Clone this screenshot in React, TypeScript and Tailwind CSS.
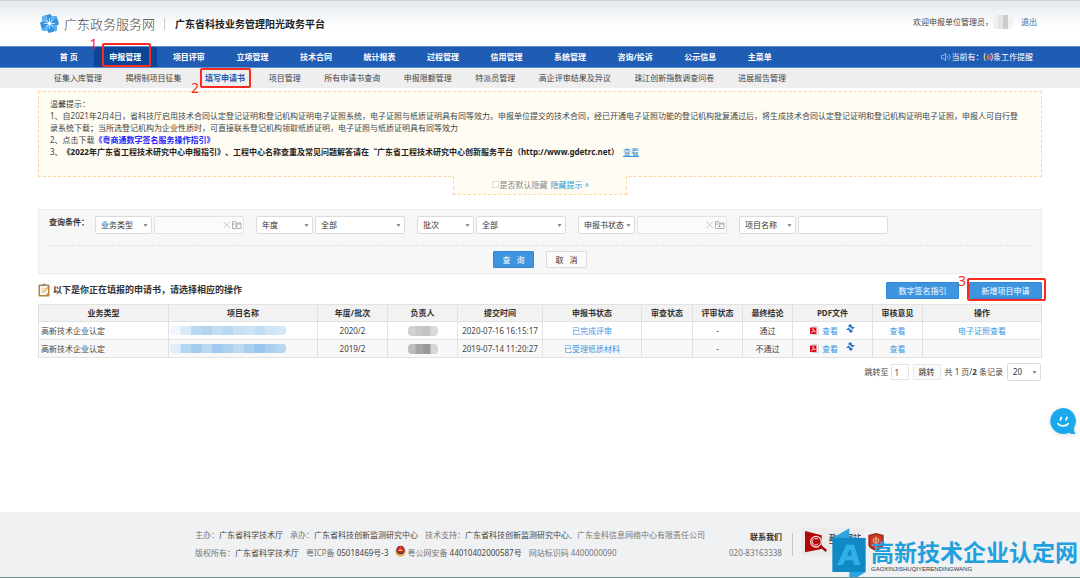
import React from 'react';

const navItems = ['首 页', '申报管理', '项目评审', '立项管理', '技术合同', '统计报表', '过程管理', '信用管理', '系统管理', '咨询/投诉', '公示信息', '主菜单'];

const subItems = ['征集入库管理', '揭榜制项目征集', '填写申请书', '项目管理', '所有申请书查询', '申报限额管理', '特派员管理', '高企评审结果及异议', '珠江创新指数调查问卷', '进展报告管理'];

const columns = [
  { label: '业务类型', width: 'w-[130px]' },
  { label: '项目名称', width: 'w-[149px]' },
  { label: '年度/批次', width: 'w-[70px]' },
  { label: '负责人', width: 'w-[70px]' },
  { label: '提交时间', width: 'w-[85px]' },
  { label: '申报书状态', width: 'w-[99px]' },
  { label: '审查状态', width: 'w-[51px]' },
  { label: '评审状态', width: 'w-[50px]' },
  { label: '最终结论', width: 'w-[50px]' },
  { label: 'PDF文件', width: 'w-[80px]' },
  { label: '审核意见', width: 'w-[50px]' },
  { label: '操作', width: 'w-auto' },
];

const rows = [
  {
    type: '高新技术企业认定',
    name: ['#f1f7fc', '#d9eaf7', '#b9d8f2', '#b3d5f1', '#c3def4', '#b7d8f2', '#c6e0f4', '#cde4f6', '#c2def4', '#cfe5f6', '#d4e8f7'],
    year: '2020/2',
    person: ['#d2d2d2', '#c9c9c9', '#c3c3c3', '#dadada'],
    time: '2020-07-16 16:15:17',
    status: '已完成评审',
    result: '通过',
    action: '电子证照查看',
  },
  {
    type: '高新技术企业认定',
    name: ['#dfeefa', '#b5d6f1', '#a3ccee', '#b9d9f2', '#9fcaed', '#abd1ef', '#bcdaf2', '#a8cfef', '#98c6ec', '#a9d0ef', '#b6d7f1'],
    year: '2019/2',
    person: ['#bdbdbd', '#a5a5a5', '#999999', '#d5d5d5'],
    time: '2019-07-14 11:20:27',
    status: '已受理纸质材料',
    result: '不通过',
    action: '',
  },
];

function Mark({ n, box, num }: { n: string; box: string; num: string }) {
  return (
    <>
      <span className={`pointer-events-none absolute z-10 rounded-[2px] border-2 border-[#fb2a20] ${box}`} />
      <span className={`pointer-events-none absolute z-10 text-[14px] leading-[14px] font-normal text-[#fb2a20] ${num}`}>{n}</span>
    </>
  );
}

function PinwheelLogo() {
  return (
    <svg className="size-[19px]" viewBox="0 0 38 38" aria-hidden="true">
      {[0, 90, 180, 270].map((a) => (
        <g key={a} transform={`rotate(${a} 19 19)`}>
          <path d="M19 18L9 9L10 3L20 0L23 3V12Z" fill="#3593e0" />
          <path d="M20 17L23 4H33L35 7L34 14L26 15Z" fill="#5fb0ee" />
        </g>
      ))}
      <path d="M19 8V30M8 19H30M11 11L27 27M27 11L11 27" stroke="#e8f4fd" strokeWidth="1.6" />
      <circle cx="19" cy="19" r="2.500" fill="#fff" />
    </svg>
  );
}

function Mosaic({ colors, cell, className }: { colors: string[]; cell: number; className: string }) {
  return (
    <svg className={className} viewBox={`0 0 ${colors.length * cell} ${cell}`} preserveAspectRatio="none" aria-hidden="true">
      {colors.map((c, i) => (
        <rect key={i} x={i * cell} width={cell + 1} height={cell} fill={c} />
      ))}
    </svg>
  );
}

function Select({ label, text, className }: { label: string; text: string; className: string }) {
  return (
    <span className={`relative flex h-[18px] items-center ${className}`}>
      <select aria-label={label} className="h-full w-full appearance-none rounded-[2px] border border-[#dcdcdc] bg-white pl-[5px] text-[8px] leading-[16px] text-[#333]">
        <option>{text}</option>
      </select>
      <svg className="pointer-events-none absolute right-[4px] size-[5px]" viewBox="0 0 10 10" aria-hidden="true">
        <path d="M1 2H9L5 8Z" fill="#888" />
      </svg>
    </span>
  );
}

function PickerInput({ label }: { label: string }) {
  return (
    <span className="relative flex h-[18px] w-[90px] items-center">
      <input aria-label={label} className="h-full w-full rounded-[2px] border border-[#e2e2e2] bg-[#fbfbfb] px-1 text-[8px]" />
      <svg className="pointer-events-none absolute right-[2px] h-[10px] w-[20px]" viewBox="0 0 40 20" fill="none" aria-hidden="true">
        <path d="M3 3L16 16M16 3L3 16" stroke="#bbb" strokeWidth="1.6" />
        <path d="M21 17V3H27L29 6H38V17ZM21 8H38M29 10V15M26 12.500H32" stroke="#999" strokeWidth="1.5" />
      </svg>
    </span>
  );
}

function PdfIcon() {
  return (
    <svg className="h-[9px] w-[9px]" viewBox="0 0 18 18" aria-hidden="true">
      <path d="M5 1H14L17 4V17H5Z" fill="#fff" stroke="#aaa" />
      <rect y="3" width="13" height="13" fill="#d8101c" />
      <path d="M3 13C6 11 7 8 6 5C6 9 9 11 11 11C8 10 5 11 3 13Z" fill="none" stroke="#fff" strokeWidth="1.2" />
    </svg>
  );
}

function RefreshIcon() {
  return (
    <svg className="mb-[4px] ml-[5px] size-[9px]" viewBox="0 0 18 18" fill="#2c78c8" aria-hidden="true">
      <path d="M8 0L12 3V6H18L13 11L9 7H8L4 4Z" />
      <path d="M10 18L6 15V12H0L5 7L9 11H10L14 14Z" />
    </svg>
  );
}

function Header() {
  return (
    <header className="flex h-[46px] items-center border-t border-[#d2d4d6] bg-linear-to-b from-[#e3e9ef] to-white to-55% pr-[43px] pl-[40px]">
      <PinwheelLogo />
      <span className="ml-[5px] text-[13px] leading-[18px] font-light text-[#444]">广东政务服务网</span>
      <span className="mr-[10px] ml-[9px] h-[12px] w-px bg-[#ccc]" />
      <h1 className="text-[10px] leading-[18px] font-bold text-[#222]">广东省科技业务管理阳光政务平台</h1>
      <div className="ml-auto flex items-center pb-[3px] text-[8px] leading-[12px]">
        <span className="text-[#444]">欢迎申报单位管理员，</span>
        <Mosaic colors={['#f0f0f0', '#e4e4e4', '#cccccc', '#f2f2f2']} cell={10} className="h-[14px] w-[20px] rounded-[4px]" />
        <a href="#" className="ml-[8px] text-[#2f6ea8]">退出</a>
      </div>
    </header>
  );
}

function Nav() {
  return (
    <nav>
      <div className="flex h-[22px] border-y border-[#5d8fd0] bg-[#1f5cb4] pr-[47px] pl-[44px] text-[8px] leading-[20px] text-white">
        <ul className="mr-[153px] flex flex-1 font-bold">
          {navItems.map((item) => (
            <li key={item} className={`relative flex-auto text-center ${item === '申报管理' ? 'bg-[#0c4496]' : ''}`}>
              <a href="#" className="block">{item}</a>
              {item === '申报管理' && <Mark n="1" box="-top-[4px] left-[8px] h-[24px] w-[49px]" num="-top-[10px] -left-[4px]" />}
            </li>
          ))}
        </ul>
        <a href="#" className="flex items-center whitespace-nowrap">
          <svg className="mr-px h-[8px] w-[10px]" viewBox="0 0 20 16" fill="none" stroke="#c9dbf3" strokeWidth="1.4" aria-hidden="true">
            <path d="M1 5H4L9 1V15L4 11H1ZM12 5C14 7 14 9 12 11M15 2C19 6 19 10 15 14" />
          </svg>
          当前有：(<b className="text-[#ff6a1f]">6</b>)条工作提醒
        </a>
      </div>
      <ul className="flex h-[20px] justify-between bg-[#eee] pr-[294px] pl-[54px] text-[8px] leading-[20px] text-[#444]">
        {subItems.map((item) => (
          <li key={item} className="relative">
            <a href="#" className={item === '填写申请书' ? 'font-bold text-[#1f5cb4]' : ''}>{item}</a>
            {item === '填写申请书' && <Mark n="2" box="top-0 -left-[5px] h-[20px] w-[51px]" num="top-[13px] -left-[14px]" />}
          </li>
        ))}
      </ul>
    </nav>
  );
}

function Tips() {
  return (
    <section className="mt-[3px] text-[8px] leading-[12px] text-[#444]">
      <div className="h-[86px] border border-dashed border-[#fbd9a0] bg-[#fffdf3] pt-[6px] pr-[22px] pl-[11px]">
        <p>温馨提示：</p>
        <p>1、自2021年2月4日，省科技厅启用技术合同认定登记证明和登记机构证明电子证照系统，电子证照与纸质证明具有同等效力。申报单位提交的技术合同，经已开通电子证照功能的登记机构批复通过后，将生成技术合同认定登记证明和登记机构证明电子证照，申报人可自行登录系统下载；当所选登记机构为企业性质时，可直接联系登记机构领取纸质证明，电子证照与纸质证明具有同等效力</p>
        <p>2、点击下载<a href="#" className="font-bold text-[#2a1fff]">《粤商通数字签名服务操作指引》</a></p>
        <p>
          3、<b className="text-[#222]">《2022年广东省工程技术研究中心申报指引》、工程中心名称查重及常见问题解答请在<span className="font-['Noto_Sans_CJK_SC',sans-serif]">“</span>广东省工程技术研究中心创新服务平台（http://www.gdetrc.net）</b>
          <a href="#" className="ml-[4px] text-[#3593dd] underline">查看</a>
        </p>
      </div>
      <div className="mx-auto -mt-px flex h-[19px] w-[174px] items-center justify-center border border-t-0 border-dashed border-[#fbd9a0] bg-[#fffdf3] pb-px text-[#888]">
        <label className="flex items-center">
          <input type="checkbox" className="mr-px size-[7px] appearance-none border border-[#ddd] bg-white" />
          是否默认隐藏
        </label>
        <a href="#" className="ml-[3px] flex items-center text-[#2f97d0]">
          隐藏提示
          <svg className="ml-[2px] size-[4px]" viewBox="0 0 10 10" fill="none" stroke="#2f97d0" strokeWidth="2" aria-hidden="true">
            <path d="M1 5L5 1L9 5M1 9L5 5L9 9" />
          </svg>
        </a>
      </div>
    </section>
  );
}

function Filters() {
  return (
    <form className="mt-[14px] border border-[#ececec] bg-[#f7f7f7] px-[8px] pt-[6px] pb-[5px] text-[8px]">
      <div className="flex items-start border-b border-dashed border-[#e2e2e2] pb-[11px] pl-[2px]">
        <span className="w-[46px] leading-[12px] font-bold text-[#333]">查询条件：</span>
        <div className="flex flex-wrap gap-x-[12px]">
          <div className="flex gap-[2px]"><Select label="条件一" text="业务类型" className="w-[57px]" /><PickerInput label="业务类型" /></div>
          <div className="flex gap-[2px]"><Select label="条件二" text="年度" className="w-[57px]" /><Select label="年度" text="全部" className="w-[90px]" /></div>
          <div className="flex gap-[2px]"><Select label="条件三" text="批次" className="w-[57px]" /><Select label="批次" text="全部" className="w-[90px]" /></div>
          <div className="flex gap-[2px]"><Select label="条件四" text="申报书状态" className="w-[57px]" /><PickerInput label="申报书状态" /></div>
          <div className="flex gap-[2px]">
            <Select label="条件五" text="项目名称" className="w-[57px]" />
            <input aria-label="项目名称" className="h-[18px] w-[90px] rounded-[2px] border border-[#dcdcdc] bg-white px-1" />
          </div>
        </div>
      </div>
      <div className="mt-[5px] flex justify-center gap-[12px]">
        <button type="button" className="h-[17px] w-[41px] rounded-[1px] border border-[#3288d4] bg-[#3e95df] leading-[15px] whitespace-pre text-white">查   询</button>
        <button type="button" className="h-[17px] w-[41px] rounded-[1px] border border-[#dcdcdc] bg-[#fbfbfb] leading-[15px] whitespace-pre text-[#333]">取   消</button>
      </div>
    </form>
  );
}

function Results() {
  const cell = 'border border-[#e2e2e2] p-0';
  return (
    <section className="text-[8px] text-[#444]">
      <div className="mt-[6px] flex h-[20px] items-center">
        <svg className="h-[14px] w-[12px]" viewBox="0 0 24 28" aria-hidden="true">
          <rect x="1" y="3" width="22" height="24" rx="2" fill="#b9803f" />
          <path d="M4 6H20V20L16 24H4Z" fill="#f6f3ec" />
          <path d="M16 24V20H20Z" fill="#d6cfc0" />
          <path d="M8 6V3H10C10 0 14 0 14 3H16V6Z" fill="#8a8a8a" />
          <path d="M7 11H16M7 14H14M7 17H12" stroke="#bdbdbd" />
          <path d="M9 20L10 17L18 9L20 11L12 19Z" fill="#f1b44c" />
          <path d="M18 9L20 7L22 9L20 11Z" fill="#e06a8b" />
        </svg>
        <h2 className="ml-[3px] text-[9px] leading-[14px] font-bold text-[#333]">以下是你正在填报的申请书，请选择相应的操作</h2>
        <button type="button" className="ml-auto h-[17px] w-[73px] rounded-[1px] border border-[#3288d4] bg-[#3e95df] leading-[15px] text-white">数字签名指引</button>
        <div className="relative ml-[10px] h-[17px]">
          <button type="button" className="block h-[17px] w-[73px] rounded-[1px] border border-[#3288d4] bg-[#3e95df] leading-[15px] text-white">新增项目申请</button>
          <Mark n="3" box="-top-[4px] -left-[2px] h-[23px] w-[79px]" num="-top-[8px] -left-[11px]" />
        </div>
      </div>
      <table className="mt-[4px] w-full table-fixed border-collapse text-center leading-[16px]">
        <thead>
          <tr className="bg-[#f2f2f2] text-[#333]">
            {columns.map((c) => (
              <th key={c.label} scope="col" className={`border border-[#e2e2e2] p-0 font-bold ${c.width}`}>{c.label}</th>
            ))}
          </tr>
        </thead>
        <tbody>
          {rows.map((r) => (
            <tr key={r.time} className="h-[18px] even:bg-[#f8f8f8]">
              <td className="border border-[#e2e2e2] py-0 pr-0 pl-[2px] text-left">{r.type}</td>
              <td className={cell}><Mosaic colors={r.name} cell={10} className="ml-px h-[9px] w-[116px] rounded-[3px]" /></td>
              <td className={cell}>{r.year}</td>
              <td className={cell}><Mosaic colors={r.person} cell={10} className="mx-auto h-[10px] w-[30px] rounded-[4px]" /></td>
              <td className={cell}>{r.time}</td>
              <td className={cell}><a href="#" className="text-[#3e95df]">{r.status}</a></td>
              <td className={cell} />
              <td className={cell}>-</td>
              <td className={cell}>{r.result}</td>
              <td className={cell}>
                <span className="flex items-center justify-center gap-[3px]">
                  <PdfIcon />
                  <a href="#" className="text-[#3e95df]">查看</a>
                  <RefreshIcon />
                </span>
              </td>
              <td className={cell}><a href="#" className="text-[#3e95df]">查看</a></td>
              <td className={cell}>{r.action && <a href="#" className="text-[#3e95df]">{r.action}</a>}</td>
            </tr>
          ))}
        </tbody>
      </table>
      <div className="mt-[5px] flex items-center justify-end pr-px">
        <label htmlFor="page" className="mr-[2px]">跳转至</label>
        <input id="page" defaultValue="1" className="h-[16px] w-[18px] rounded-[1px] border border-[#e2e2e2] bg-white px-[3px]" />
        <button type="button" className="mx-[4px] h-[16px] w-[28px] rounded-[1px] border border-[#e8e8e8] bg-[#fafafa] leading-[14px] text-[#333]">跳转</button>
        <span className="mr-[4px]">共 1 页/<b>2</b> 条记录</span>
        <Select label="每页条数" text="20" className="w-[34px]" />
      </div>
    </section>
  );
}

function Footer() {
  const strong = 'text-[#444]';
  return (
    <footer className="relative mt-auto flex h-[66px] items-start overflow-hidden border-b border-[#6b8f86] bg-[#f0f1f3] pt-[14px] pl-[195px] text-[8px] leading-[18px] whitespace-nowrap text-[#777]">
      <div className="w-[513px]">
        <p className="flex gap-[7px]">
          <span>主办：<span className={strong}>广东省科学技术厅</span></span>
          <span>承办：<span className={strong}>广东省科技创新监测研究中心</span></span>
          <span>技术支持：<span className={strong}>广东省科技创新监测研究中心</span>、广东金科信息网络中心有限责任公司</span>
        </p>
        <p className="flex items-center gap-[7px]">
          <span>版权所有：<span className={strong}>广东省科学技术厅</span></span>
          <span>粤ICP备 <span className={strong}>05018469号-3</span></span>
          <span className="flex items-center">
            <svg className="mr-px mb-[4px] h-[12px] w-[11px]" viewBox="0 0 22 24" aria-hidden="true">
              <path d="M1 10C0 19 5 23 11 23C17 23 22 19 21 10Z" fill="#e9b04c" />
              <circle cx="11" cy="10" r="8.500" fill="#2b2f6b" />
              <circle cx="11" cy="9" r="7" fill="#e02a22" />
              <path d="M7 12H15L14 9H8ZM11 4L12 6H10Z" fill="#f5c34d" />
            </svg>
            粤公网安备&nbsp;<span className={strong}>44010402000587号</span>
          </span>
          <span>网站标识码 4400000090</span>
        </p>
      </div>
      <div className="ml-[21px] pt-[3px] text-right leading-[16px]">
        <p className="font-bold text-[#333]">联系我们</p>
        <p>020-83163338</p>
      </div>
      <span className="mt-[7px] ml-[10px] h-[23px] w-px bg-[#c4c6c8]" />
      <div className="mt-[2px] ml-[9px] flex h-[27px] w-[62px] items-start bg-[#ebebea]">
        <svg className="mt-[3px] ml-[3px] h-[23px] w-[24px] shrink-0" viewBox="0 0 72 69" aria-hidden="true">
          <path d="M0 0L50 13V54L0 64Z" fill="#b5060b" />
          <circle cx="33" cy="32" r="16" fill="#b5060b" stroke="#f2dede" strokeWidth="4" />
          <path d="M40 26A10 10 0 1 0 40 38" fill="none" stroke="#f2dede" strokeWidth="3" />
          <path d="M45 44L64 60" stroke="#a00b10" strokeWidth="7" />
        </svg>
        <span className="flex-1 border-b border-[#c33] pt-[4px] text-[8px] leading-[11px] font-bold text-[#444]">政府网站</span>
      </div>
      <svg className="mt-[7px] ml-[4px] h-[18px] w-[16px] shrink-0" viewBox="0 0 48 54" aria-hidden="true">
        <path d="M24 0L47 6V34C47 44 36 50 24 54C12 50 1 44 1 34V6Z" fill="#8f2a1c" />
        <path d="M24 4L43 9V33C43 41 34 45 24 49C14 45 5 41 5 33V9Z" fill="#c93a25" />
        <path d="M24 10V42M16 18H32V27H16ZM19 33H29" fill="none" stroke="#efb98a" strokeWidth="3" />
      </svg>
      <div className="pointer-events-none absolute right-[2px] bottom-0 flex h-[50px] items-start">
        <svg className="h-[50px] w-[34px]" viewBox="0 0 100 150" aria-hidden="true">
          <path d="M0 34L51 4V38H0Z" fill="#2aa5e0" />
          <rect y="33" width="100" height="102" fill="#1089c4" />
          <path d="M51 135H100L51 165Z" fill="#2aa5e0" />
          <path d="M14 114L42 53H65L84 114H66L62 100H38L32 114ZM44 86H59L53 65Z" fill="#2fb0ea" fillRule="evenodd" />
        </svg>
        <div className="ml-[5px] pt-[13px]">
          <p className="text-[23px] leading-[24px] font-bold text-[#229fdd]">高新技术企业认定网</p>
          <p className="pt-px font-['Liberation_Sans'] text-[6px] leading-[8px] text-[#333]">GAOXINJISHUQIYERENDINGWANG</p>
        </div>
      </div>
    </footer>
  );
}

export default function App() {
  return (
    <div className="relative flex min-h-screen flex-col bg-white font-['Noto_Sans','Noto_Sans_CJK_SC',sans-serif]">
      <Header />
      <Nav />
      <main className="px-[38px]">
        <Tips />
        <Filters />
        <Results />
      </main>
      <button type="button" aria-label="在线客服" className="fixed right-[3px] bottom-[143px]">
        <svg className="size-[28px] drop-shadow-sm" viewBox="0 0 84 84" aria-hidden="true">
          <path d="M42 3A39 39 0 1 0 60 77C66 81 74 82 80 81C76 76 75 70 75 62A39 39 0 0 0 42 3Z" fill="#1ba9ee" />
          <path d="M37 31L34 39M54 31L51 39" stroke="#fff" strokeWidth="5" strokeLinecap="round" />
          <path d="M27 50C34 59 50 59 58 50" fill="none" stroke="#fff" strokeWidth="5" strokeLinecap="round" />
        </svg>
      </button>
      <Footer />
    </div>
  );
}
